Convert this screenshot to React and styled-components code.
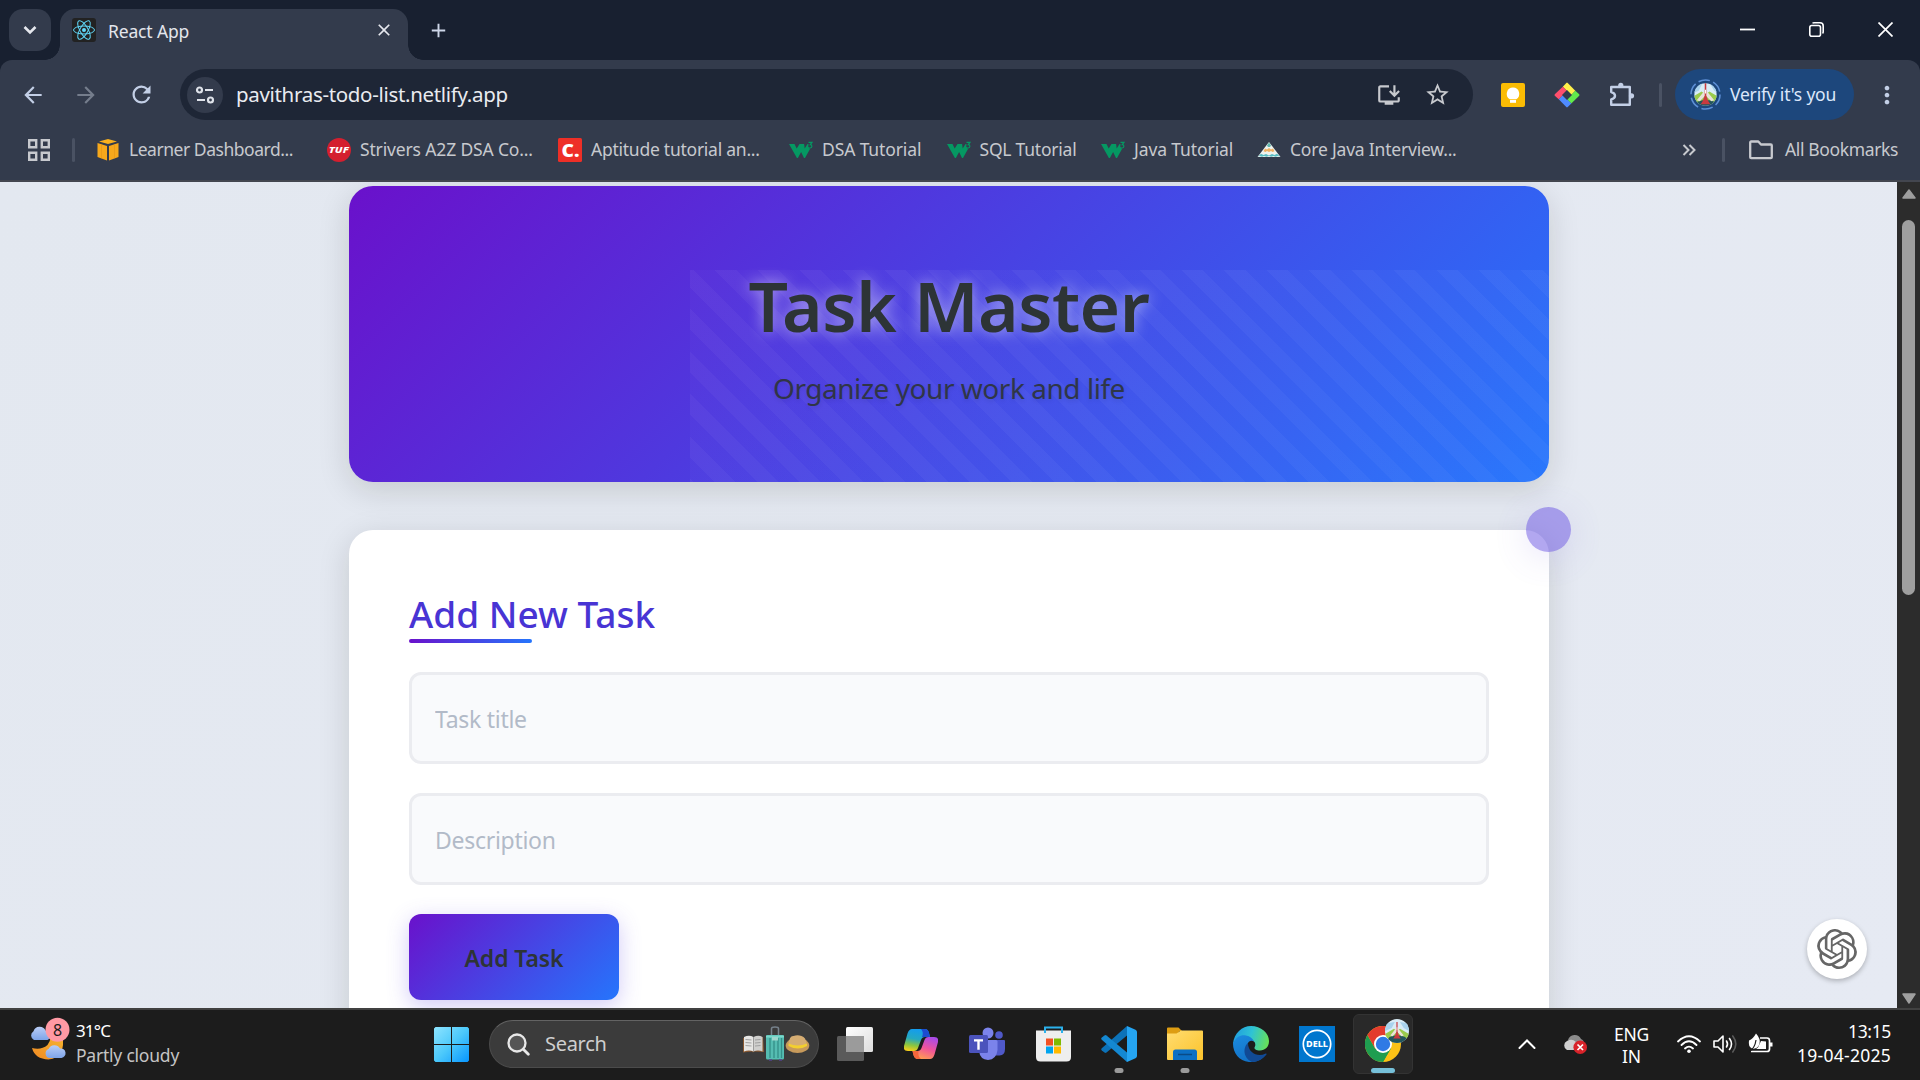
import React from "react";
import styled, { createGlobalStyle, css } from "styled-components";
import { MdArrowBack, MdArrowForward, MdRefresh, MdInstallDesktop, MdStarBorder, MdMoreVert, MdClose, MdAdd } from "react-icons/md";
import { SiOpenai } from "react-icons/si";

const Global = createGlobalStyle`
  * { box-sizing: border-box; }
  body { margin: 0; background: #1c1c1c; overflow: hidden; font-family: "Noto Sans", "Open Sans", sans-serif; }
  svg { display: block; flex: none; }
`;

const Screen = styled.div`
  width: 1920px;
  height: 1080px;
  display: flex;
  flex-direction: column;
  overflow: hidden;
`;

const Text = styled.span`
  display: block;
  white-space: nowrap;
  flex: none;
  padding-bottom: ${(p) => p.$pb ?? 2}px;
  font-size: ${(p) => p.$size || 17.5}px;
  line-height: ${(p) => p.$line || 22}px;
  letter-spacing: ${(p) => p.$track || 0}px;
  color: ${(p) => p.$color || "#dfe2e8"};
`;

/* ---------- browser chrome ---------- */
const TabStrip = styled.div`
  height: 60px;
  flex: none;
  display: flex;
  background: #182030;
  padding: 9px 0 0 9px;
`;
const TabSearch = styled.div`
  width: 42px;
  height: 42px;
  border-radius: 14px;
  background: #333b4c;
  display: flex;
  align-items: center;
  justify-content: center;
  margin-right: 9px;
`;
const Tab = styled.div`
  position: relative;
  width: 348px;
  height: 51px;
  border-radius: 15px 15px 0 0;
  background: #333b4c;
  display: flex;
  align-items: center;
  padding: 0 14px 8px 12px;
  &::before, &::after {
    content: "";
    position: absolute;
    bottom: 0;
    width: 15px;
    height: 15px;
  }
  &::before { left: -15px; background: radial-gradient(circle at 0 0, transparent 14.5px, #333b4c 15px); }
  &::after { right: -15px; background: radial-gradient(circle at 100% 0, transparent 14.5px, #333b4c 15px); }
`;
const Favicon = styled.div`
  width: 24px;
  height: 24px;
  border-radius: 3px;
  background: #222;
  margin: 0 12px 2px 0;
`;
const Spacer = styled.div`flex: 1;`;
const TabClose = styled(MdClose)`margin-bottom: 2px;`;
const NewTab = styled.div`
  width: 60px;
  height: 42px;
  display: flex;
  align-items: center;
  justify-content: center;
`;
const WindowButton = styled.div`
  width: 69px;
  height: 41px;
  display: flex;
  align-items: center;
  justify-content: center;
`;
const ToolbarWrap = styled.div`
  height: 122px;
  flex: none;
  background: #182030;
`;
const ToolbarBody = styled.div`
  height: 122px;
  background: #333b4c;
  border-radius: 12px 12px 0 0;
  border-bottom: 2px solid #43464f;
`;
const NavRow = styled.div`
  height: 69px;
  display: flex;
  align-items: center;
  padding-left: 20px;
`;
const IconSlot = styled.div`
  width: ${(p) => p.$w}px;
  height: ${(p) => p.$h || p.$w}px;
  margin-left: ${(p) => p.$ml || 0}px;
  display: flex;
  align-items: center;
  justify-content: center;
  flex: none;
  color: ${(p) => p.$color || "#c3cfe6"};
`;
const Omnibox = styled.div`
  width: 1293px;
  height: 51px;
  border-radius: 26px;
  background: #1e2636;
  margin-left: 25px;
  display: flex;
  align-items: center;
  padding: 0 22px 0 7px;
`;
const SiteChip = styled.div`
  width: 36px;
  height: 36px;
  border-radius: 50%;
  background: #333b4c;
  margin-right: 13px;
  display: flex;
  align-items: center;
  justify-content: center;
`;
const Divider = styled.div`
  width: 3px;
  height: 24px;
  border-radius: 2px;
  background: #4a5263;
  margin-left: ${(p) => p.$ml}px;
`;
const ProfilePill = styled.div`
  width: 179px;
  height: 51px;
  border-radius: 26px;
  background: #1d477c;
  margin-left: 13px;
  display: flex;
  align-items: center;
  padding-left: 15px;
  gap: 9px;
`;
const BookmarkRow = styled.div`
  height: 42px;
  display: flex;
  align-items: center;
  padding-left: 28px;
`;
const Bookmark = styled.div`
  display: flex;
  align-items: center;
  gap: 9px;
  width: ${(p) => p.$w}px;
  flex: none;
`;

/* ---------- page ---------- */
const Viewport = styled.div`
  height: 826px;
  flex: none;
  display: flex;
  overflow: hidden;
`;
const Page = styled.div`
  position: relative;
  width: 1897px;
  height: 826px;
  overflow: hidden;
  background: linear-gradient(135deg, #e3e8f0, #e6eaf3);
  padding: 4px 0 0 349px;
`;
const Hero = styled.header`
  position: relative;
  width: 1200px;
  height: 296px;
  border-radius: 24px;
  overflow: hidden;
  background: linear-gradient(135deg, #6a11cb 0%, #2575fc 100%);
  display: flex;
  flex-direction: column;
  align-items: center;
  padding-top: 71px;
  &::before {
    content: "";
    position: absolute;
    left: 341px;
    top: 84px;
    right: 0;
    bottom: 0;
    background: repeating-linear-gradient(45deg, rgba(255, 255, 255, 0.05) 0 2.5px, rgba(255, 255, 255, 0.02) 2.5px 17.5px, rgba(255, 255, 255, 0.05) 17.5px 30px);
  }
`;
const HeroShadow = styled.div`
  width: 1200px;
  border-radius: 24px;
  box-shadow: 0 8px 32px rgba(20, 20, 0, 0.14);
`;
const Title = styled.h1`
  position: relative;
  margin: 0;
  font-size: 69.5px;
  line-height: 96px;
  font-weight: 600;
  letter-spacing: -0.5px;
  white-space: nowrap;
  color: #2d3436;
  text-shadow: 0 0 15px rgba(255, 255, 255, 0.55);
`;
const Subtitle = styled.p`
  position: relative;
  margin: 14px 0 0;
  font-size: 28px;
  line-height: 42px;
  letter-spacing: -0.46px;
  white-space: nowrap;
  color: #2d3436;
  opacity: 0.9;
  text-shadow: 0 2px 4px rgba(0, 0, 0, 0.1);
`;
const Card = styled.section`
  position: relative;
  width: 1200px;
  height: 640px;
  margin-top: 48px;
  border-radius: 24px;
  background: #fff;
  box-shadow: 0 8px 32px rgba(20, 20, 0, 0.14);
  padding: 59px 60px;
  display: flex;
  flex-direction: column;
  align-items: flex-start;
`;
const Orb = styled.div`
  position: absolute;
  right: -22px;
  top: -23px;
  width: 45px;
  height: 45px;
  border-radius: 50%;
  opacity: 0.5;
  background: #6751e3;
  box-shadow: 0 6px 30px rgba(103, 81, 227, 0.25);
`;
const Heading = styled.h2`
  margin: 0;
  font-size: 37px;
  line-height: 49px;
  font-weight: 500;
  color: #4834d4;
  letter-spacing: 0;
  white-space: nowrap;
`;
const Underline = styled.div`
  width: 123px;
  height: 4px;
  margin-top: 1px;
  border-radius: 2px;
  background: linear-gradient(90deg, #6a11cb, #2575fc);
`;
const Field = styled.input`
  width: 1080px;
  height: 92px;
  margin: 29px 0 0;
  border: 3px solid #ebecf0;
  border-radius: 12px;
  background: #f9fafc;
  padding: 1px 24px 0 23px;
  font: 400 23px "Noto Sans", sans-serif;
  letter-spacing: -0.28px;
  &::placeholder { color: #b2bac8; opacity: 1; }
`;
const AddButton = styled.button`
  width: 210px;
  height: 86px;
  margin: 29px 0 0;
  border: 0;
  border-radius: 12px;
  background: linear-gradient(135deg, #6a11cb 0%, #2575fc 100%);
  box-shadow: 0 6px 22px rgba(103, 81, 227, 0.3);
  font: 600 23px "Noto Sans", sans-serif;
  letter-spacing: -0.1px;
  color: #2d3436;
  padding: 1px 0 0;
`;
const ChatBubble = styled.div`
  position: absolute;
  left: 1807px;
  top: 737px;
  width: 60px;
  height: 60px;
  border-radius: 50%;
  background: #fff;
  box-shadow: 0 2px 5px rgba(0, 0, 0, 0.25);
  display: flex;
  align-items: center;
  justify-content: center;
  color: #666;
`;
const Scrollbar = styled.div`
  width: 23px;
  background: #2c2c2c;
  display: flex;
  flex-direction: column;
  align-items: center;
  padding-top: 7px;
`;
const Thumb = styled.div`
  width: 13px;
  height: 375px;
  border-radius: 7px;
  background: #9f9f9f;
  margin: 21px 0 398px;
`;

/* ---------- taskbar ---------- */
const Taskbar = styled.div`
  height: 72px;
  flex: none;
  border-top: 2px solid #414141;
  background: #1c1c1c;
  display: flex;
  align-items: center;
  padding-bottom: 2px;
`;
const Weather = styled.div`
  width: 434px;
  display: flex;
  padding-left: 29px;
  gap: 5px;
  align-items: center;
`;
const WeatherGlyph = styled.div`padding-bottom: 11px;`;
const Stack = styled.div`
  display: flex;
  flex-direction: column;
  align-items: ${(p) => p.$align || "flex-start"};
  margin: ${(p) => p.$mt || 0}px 0 0 ${(p) => p.$ml || 0}px;
`;
const SearchBox = styled.div`
  width: 330px;
  height: 48px;
  margin: 0 3px 0 20px;
  border-radius: 24px;
  border: 1px solid #4b4b4b;
  border-top-color: #636363;
  background: #3b3b3b;
  display: flex;
  align-items: center;
  padding: 0 8px 0 17px;
`;
const AppCell = styled.div`
  position: relative;
  width: 60px;
  height: 60px;
  margin: 0 3px;
  border-radius: 6px;
  display: flex;
  align-items: center;
  justify-content: center;
  ${(p) => p.$active && css`background: #292929; border: 1px solid #333;`}
  &::after {
    content: "";
    position: absolute;
    bottom: ${(p) => (p.$active ? 0 : 1)}px;
    left: 50%;
    transform: translateX(-50%);
    height: 5px;
    border-radius: 3px;
    width: ${(p) => (p.$active ? 24 : p.$running ? 9 : 0)}px;
    background: ${(p) => (p.$active ? "#76c0d9" : "#9a9a9a")};
  }
`;
const Badge = styled.div`
  position: absolute;
  left: 31px;
  top: 4px;
`;
const Tray = styled.div`
  flex: 1;
  display: flex;
  align-items: center;
  justify-content: flex-end;
  padding-right: 29px;
`;

/* ---------- drawings ---------- */
const ReactLogo = () => (
  <svg width="24" height="24" viewBox="-12 -12 24 24" fill="none" stroke="#61dafb" strokeWidth="1">
    <ellipse rx="10.5" ry="4" />
    <ellipse rx="10.5" ry="4" transform="rotate(60)" />
    <ellipse rx="10.5" ry="4" transform="rotate(120)" />
    <circle r="2" fill="#61dafb" stroke="none" />
  </svg>
);
const TuneIcon = () => (
  <svg width="20" height="20" viewBox="0 0 20 20" fill="none" stroke="#dfe3ea" strokeWidth="2.2">
    <circle cx="4.500" cy="5" r="2.500" /><path d="M10 5h8M2 15h8" /><circle cx="15.500" cy="15" r="2.500" />
  </svg>
);
const GridIcon = () => (
  <svg width="22" height="22" viewBox="0 0 22 22" fill="none" stroke="#c7c9ce" strokeWidth="2.4">
    <path d="M1.2 1.2h7v7h-7zM13.8 1.2h7v7h-7zM1.2 13.8h7v7h-7zM13.8 13.8h7v7h-7z" />
  </svg>
);
const CubeIcon = () => (
  <svg width="24" height="24" viewBox="0 0 24 24">
    <path d="M3 3.500L12 1l9 2.500L12 6z" fill="#f9b01e" />
    <path d="M1.500 5l9.500 3v14.500L1.500 19z" fill="#f7a81b" />
    <path d="M22.500 5L13 8v14.500l9.500-3.500z" fill="#f7a81b" />
    <path d="M5.500 6.300v14M18.500 6.300v14" stroke="#e3941a" strokeWidth=".6" />
  </svg>
);
const TufIcon = () => (
  <svg width="24" height="24" viewBox="0 0 24 24">
    <circle cx="12" cy="12" r="12" fill="#d41f2f" />
    <text x="1.800" y="15.300" fontFamily="Noto Sans" fontWeight="800" fontStyle="italic" fontSize="9" textLength="20" lengthAdjust="spacingAndGlyphs" fill="#fff">TUF</text>
  </svg>
);
const CIcon = () => (
  <svg width="24" height="24" viewBox="0 0 24 24" overflow="visible">
    <rect width="24" height="24" rx="1.500" fill="#ee2f27" />
    <text x="3.500" y="18.800" fontFamily="Noto Sans" fontWeight="900" fontSize="18" textLength="18" lengthAdjust="spacingAndGlyphs" fill="#fff">C.</text>
  </svg>
);
const W3Icon = () => (
  <svg width="24" height="24" viewBox="0 0 24 24">
    <path d="M0 6h5.500l2.200 4.500L10.500 6h4.600l.6 4.500L18.500 6h1l-.2 3 1.700 2-5 9h-1l-2.900-6-3.200 6h-1z" fill="#059862" />
    <path d="M19.500 4.400h3.400l-1.600 2.200c2 0 2.200 3.200 0 3.400-1 .1-1.600-.3-1.900-.8" fill="none" stroke="#059862" strokeWidth="1.200" />
  </svg>
);
const PeakIcon = () => (
  <svg width="24" height="24" viewBox="0 0 24 24">
    <path d="M12 4l5 6.500 6.500 8.500H.5L7 10.500z" fill="#eef3ee" />
    <path d="M10 7.500l2-3 2 3-1 1.500h-2z" fill="#5fb5ad" />
    <path d="M8 10.500l2 1 2-1.500 2 1.500 2-1 1.500 2.800-2 .6-1.500-1-2 1.200-2-1.200-1.500 1-2-.6z" fill="#f0b060" />
    <path d="M1 18.800l3-3 2.500 1.200 2.500-1 3 1.500 3-1.500 2.500 1 2.500-1.200 3 3-2-.7-2.500.7-2-.7-2.300.7-2.200-.7-2.500.7-2.500-.7-2 .7-2.500-.7z" fill="#58bcc2" />
  </svg>
);
const FolderOutline = () => (
  <svg width="24" height="20" viewBox="0 0 24 20" fill="none" stroke="#c7c9ce" strokeWidth="2.300">
    <path d="M1.200 3V17.200q0 1 1 1H21.800q1 0 1-1V5.500q0-1-1-1H12L9.300 1.500H2.200q-1 0-1 1z" strokeLinejoin="round" />
  </svg>
);
const PuzzleIcon = () => (
  <svg width="26" height="26" viewBox="0 0 26 26">
    <path d="M2.200 5h18.600v17.800H2.200v-5.300q3.800-1 3.800-3.700t-3.800-3.700z" fill="none" stroke="#c3cfe6" strokeWidth="2.400" strokeLinejoin="round" />
    <circle cx="11.800" cy="3.400" r="2.600" fill="#c3cfe6" />
    <circle cx="22.500" cy="13.800" r="2.600" fill="#c3cfe6" />
  </svg>
);
const KeepIcon = () => (
  <svg width="24" height="24" viewBox="0 0 24 24">
    <rect width="24" height="24" rx="2" fill="#fbbc04" />
    <path d="M12 4.500a6.300 6.300 0 0 0-3.200 11.700h6.400A6.300 6.300 0 0 0 12 4.500z" fill="#fff" />
    <rect x="9" y="17" width="6" height="2.800" fill="#fff" />
  </svg>
);
const DiamondIcon = () => (
  <svg width="26" height="26" viewBox="0 0 26 26">
    <path d="M8.800 4.700L12.300.9q.7-.6 1.400 0L21.300 8.800l-4 4.200z" fill="#fff04a" />
    <path d="M21.300 8.800l3.900 3.400q.6.800 0 1.600L17.300 21.500 13 17.300z" fill="#62ea4c" />
    <path d="M4.700 17.200L8.700 13l8.600 8.500-3.600 3.600q-.7.600-1.400 0z" fill="#4f8bff" />
    <path d="M8.800 4.700l4.200 4-8.300 8.500-3.900-3.400q-.6-.8 0-1.600z" fill="#ff4f6d" />
    <path d="M13 8L18 13 13 18 8 13z" fill="#333b4c" />
  </svg>
);
const Scene = ({ size, ring }) => (
  <svg width={size} height={size} viewBox="-16 -16 32 32">
    <defs><clipPath id={"disc" + size}><circle r={ring ? 11.500 : 16} /></clipPath></defs>
    {ring && <circle r="15" fill="none" stroke="#5d8fd6" strokeWidth="1.600" strokeDasharray="12 3.700" />}
    <g clipPath={`url(#disc${size})`}>
      <rect x="-16" y="-16" width="32" height="32" fill="#d9ecf7" />
      <path d="M-16-10L-3-12l-4 8-9 4zM16-10L4-12l5 8 7 4z" fill="#a9d3ee" />
      <path d="M-16 4L-4-3 0 0l4-3L16 4v6H-16z" fill="#9acb4c" />
      <path d="M-16 16l6-8 7-2h7l7 2 5 8z" fill="#23555c" />
      <path d="M-9 6L-1-4h2l8 10-3 1-6-6-6 6z" fill="#e8e2da" />
      <path d="M-.8-12H.8V1L3 7l2 3H-5l2-3 2.200-6z" fill="#c93a3f" />
      <path d="M-.5-5h1v4h-1z" fill="#fff" />
    </g>
  </svg>
);
const WeatherIcon = () => (
  <svg width="42" height="44" viewBox="0 0 42 44">
    <defs>
      <linearGradient id="moon" x1="0" y1="1" x2="1" y2="0"><stop stopColor="#f08a24" /><stop offset="1" stopColor="#f7b32e" /></linearGradient>
      <linearGradient id="cloud" x1="0" y1="0" x2="0" y2="1"><stop stopColor="#b9cdf6" /><stop offset="1" stopColor="#7ea4e8" /></linearGradient>
    </defs>
    <path d="M3 31q9 2.500 15.500-3 3-4 3-8h12q1.500 8-1 14-4 8-13 8.500Q6 42 3 31z" fill="url(#moon)" />
    <path d="M5 23a5 5 0 0 1-.5-8.800A6.500 6.500 0 0 1 16.500 13.500a5 5 0 0 1 2 9.500z" fill="url(#cloud)" />
    <path d="M20 41a4.800 4.800 0 0 1-.5-9A6.500 6.500 0 0 1 31 31.500a4.800 4.800 0 0 1 1.500 9.500z" fill="url(#cloud)" />
    <circle cx="28.500" cy="12.800" r="12" fill="#ff99a4" />
    <text x="28.500" y="18.500" textAnchor="middle" fontFamily="Noto Sans" fontSize="16" fill="#1c1c1c">8</text>
  </svg>
);
const StartIcon = () => (
  <svg width="35" height="35" viewBox="0 0 35 35">
    <defs><linearGradient id="win" gradientUnits="userSpaceOnUse" x1="0" y1="0" x2="35" y2="35"><stop stopColor="#8ee4ff" /><stop offset=".5" stopColor="#4cc9fb" /><stop offset="1" stopColor="#0795ff" /></linearGradient></defs>
    <path d="M1.500 0H17v17H0V1.500zM18 0h15.500L35 1.500V17H18zM0 18h17v17H1.500L0 33.500zM18 18h17v15.500L33.500 35H18z" fill="url(#win)" />
  </svg>
);
const SearchIcon = () => (
  <svg width="23" height="23" viewBox="0 0 23 23" fill="none" stroke="#e8e8e8" strokeWidth="2.300" strokeLinecap="round">
    <circle cx="10" cy="10" r="8.500" fill="#555" /><path d="M16.300 16.300l5 5" strokeWidth="2.800" />
  </svg>
);
const TravelIcons = () => (
  <svg width="68" height="36" viewBox="0 0 68 36">
    <path d="M1 12l10-1 1 1 9-1 1 15-10-.5-1 1-1-1L1 26.500z" fill="#8a5a33" />
    <path d="M2 11q5-2.500 9.500 0v14.500q-4.500-2-9.500 0z" fill="#e6e6e4" /><path d="M11.500 11q5-2.500 9 0v14.500q-4.500-2-9 0z" fill="#cfcfcd" />
    <path d="M3.500 13.500l6 .5M3.500 16.500l6 .5M3.500 19.500l6 .5M13 14l5.500-.5M13 17l5.500-.5M13 20l5.500-.5M11.500 11v14.500" stroke="#999" strokeWidth=".9" />
    <path d="M29.500 9V2.500q0-1.500 3.500-1.500t3.500 1.500V9" fill="none" stroke="#77828c" strokeWidth="1.500" />
    <rect x="24" y="9" width="18" height="24.500" rx="1.500" fill="#55bdb2" />
    <path d="M28 12v20M32 12v20M36 12v20M39.500 12v20" stroke="#348f88" strokeWidth="1.300" />
    <path d="M24 9.500h18v2H24z" fill="#7bd8cc" /><path d="M30 11h6v3.500h-6z" fill="#9ed7cd" />
    <path d="M27 34h3M37 34h3" stroke="#54438f" strokeWidth="1.500" />
    <ellipse cx="55.500" cy="19.500" rx="11.800" ry="7.500" fill="#c79a5b" />
    <path d="M46.500 18q1-8.500 5-8 4-1.500 8 0 4.500 1 5 8-8 5-18 0z" fill="#d5ad73" />
    <path d="M46.500 17.500q9 4 18.500 0v2.500q-9 5-18.500 0z" fill="#f3cf2f" />
  </svg>
);
const TaskViewIcon = () => (
  <svg width="36" height="34" viewBox="0 0 36 34">
    <defs><linearGradient id="tv" x1="0" y1="0" x2="1" y2="1"><stop stopColor="#fff" /><stop offset="1" stopColor="#ddd" /></linearGradient></defs>
    <rect y="9" width="27" height="25" rx="1.500" fill="#5a5a5a" />
    <rect x="9" width="27" height="25" rx="1.500" fill="url(#tv)" />
    <path d="M9 9h18v16H9z" fill="#9b9b9b" />
  </svg>
);
const CopilotIcon = () => (
  <svg width="34" height="32" viewBox="0 0 34 32">
    <defs>
      <linearGradient id="cpa" x1=".5" y1="0" x2=".3" y2="1"><stop stopColor="#139cf0" /><stop offset=".45" stopColor="#25a9c0" /><stop offset=".75" stopColor="#8cc63f" /><stop offset="1" stopColor="#f5cf1b" /></linearGradient>
      <linearGradient id="cpb" x1=".7" y1="0" x2=".3" y2="1"><stop stopColor="#a94be8" /><stop offset=".5" stopColor="#f0549a" /><stop offset="1" stopColor="#ffa04f" /></linearGradient>
    </defs>
    <path d="M8 1h13q3 0 4 4l1 4h-5q-3 0-4 3l-3 8q-1 3-4 3H4q-5 0-4-5L3.500 5.500Q5 1 8 1z" fill="url(#cpa)" />
    <path d="M17 1h4q3 0 4 4l1 4h-8q2-5-1-8z" fill="#1c4bd0" />
    <path d="M26 31H14q-3.500 0-4.500-4l-1-4h5q3 0 4-3l3-8q1-3 4-3H30q5 0 4 5l-3.500 12.500Q29 31 26 31z" fill="url(#cpb)" />
    <path d="M17 31h-3q-3.500 0-4.500-4l-1-4h6q-1 5 2.500 8z" fill="#f4663c" />
  </svg>
);
const TeamsIcon = () => (
  <svg width="36" height="34" viewBox="0 0 36 34">
    <circle cx="30" cy="8" r="3.800" fill="#5059c9" /><circle cx="19" cy="6" r="5.500" fill="#7b83eb" />
    <path d="M24 13h11q1 0 1 1v8q0 6-5.500 6.500H24z" fill="#5059c9" />
    <path d="M11 13h16q1.500 0 1.500 1.500V23q-1 9.500-9.500 10-8-.5-9-9z" fill="#7b83eb" />
    <rect x="0" y="8" width="19" height="18" rx="1.500" fill="#4b53bc" />
    <path d="M5 12.300h9v2.200h-3.300v8.200H8.300v-8.200H5z" fill="#fff" />
  </svg>
);
const StoreIcon = () => (
  <svg width="35" height="36" viewBox="0 0 35 36">
    <path d="M9 7V1.500h17V7" fill="none" stroke="#2bb1ec" strokeWidth="2" />
    <path d="M0 4.500h35V31q0 4.500-4.500 4.500h-26Q0 35.500 0 31z" fill="#eee" /><path d="M8 4h2v3H8zM25 4h2v3h-2z" fill="#2bb1ec" />
    <path d="M10 12.500h7v7h-7z" fill="#f25022" /><path d="M18 12.500h7v7h-7z" fill="#7fba00" /><path d="M10 20.500h7v7h-7z" fill="#00a4ef" /><path d="M18 20.500h7v7h-7z" fill="#ffb900" />
  </svg>
);
const CodeIcon = () => (
  <svg width="36" height="36" viewBox="0 0 36 36">
    <path d="M26 0v9.500L5.500 26.500q-1 .8-2 .1L.8 24.500q-1.200-1.200 0-2.300z" fill="#0c72b8" />
    <path d="M26 36v-9.500L5.500 9.500q-1-.8-2-.1L.8 11.500q-1.200 1.200 0 2.300z" fill="#1488d2" />
    <path d="M26 0l8.500 3.800q1.500.8 1.500 2.200v24q0 1.400-1.500 2.200L26 36q-.5 0 0-1z" fill="#25a5f2" />
  </svg>
);
const ExplorerIcon = () => (
  <svg width="36" height="34" viewBox="0 0 36 34">
    <defs><linearGradient id="fold" x1="0" y1="0" x2="1" y2="1"><stop stopColor="#ffdc70" /><stop offset="1" stopColor="#fcc32b" /></linearGradient></defs>
    <path d="M0 1.500Q0 .5 1 .5h10.500L15 4h-2l-3 3H0z" fill="#dd9d12" />
    <path d="M0 6.500h9.500L14 3.500h21q1 0 1 1V32q0 1-1 1H1q-1 0-1-1z" fill="url(#fold)" />
    <path d="M6 33V25q0-2.500 2.500-2.500h19q2.500 0 2.500 2.500v8z" fill="#0c70c4" /><path d="M11 27.500h14" stroke="#0a4b86" strokeWidth="1.500" />
  </svg>
);
const EdgeIcon = () => (
  <svg width="36" height="36" viewBox="0 0 36 36">
    <defs>
      <linearGradient id="ea" x1="0" y1=".3" x2="1" y2=".5"><stop stopColor="#1f9ce0" /><stop offset=".5" stopColor="#2fc3d4" /><stop offset="1" stopColor="#66e05a" /></linearGradient>
      <linearGradient id="eb" x1="0" y1="0" x2=".5" y2="1"><stop stopColor="#1b8be0" /><stop offset="1" stopColor="#1270c4" /></linearGradient>
    </defs>
    <path d="M0 18C1 7 9 0 18 0c10 0 18 7 18 15 0 6-4 9.500-9 9.500-4 0-6-1.500-5.500-3 1.500-2 1-5-1-6.500C15 10 6 10 0 18z" fill="url(#ea)" />
    <path d="M0 17.500C3 10 9 8.500 13 9.500c4 .8 7 3 8 6-3-2-6 0-6.500 3-.5 6 4 12 11 12 3 0 5-1 7-2.200C29 34 23 36.500 16 36 6 35 0 27 0 17.500z" fill="url(#eb)" />
    <path d="M15 17c-4.500 3.500-6 14 4 19 6 0 11-3 14.500-7.500.3-.8-.5-1.300-1.200-.8C25 31.500 15 27 15 17z" fill="#114a95" />
  </svg>
);
const DellIcon = () => (
  <svg width="36" height="36" viewBox="0 0 36 36">
    <path d="M0 0h36v36H0z" fill="#0076ce" /><circle cx="18" cy="18" r="13.700" fill="none" stroke="#fff" strokeWidth="1.700" />
    <text x="7" y="21.300" fontFamily="Noto Sans" fontWeight="800" fontSize="9.500" textLength="22" lengthAdjust="spacingAndGlyphs" fill="#fff">DELL</text>
  </svg>
);
const ChromeIcon = () => (
  <svg width="36" height="36" viewBox="-18 -18 36 36">
    <circle r="18" fill="#fbc116" />
    <path d="M-15.600-9A18 18 0 0 1 15.600-9H0z" fill="#e33b2e" />
    <path d="M-15.600-9A18 18 0 0 0 0 18L7.800 4.500-7.800 4.500z" fill="#1f9d50" />
    <path d="M-15.600-9L-7.800 4.500 0 0 0-9z" fill="#e33b2e" />
    <path d="M0 18L7.800 4.500 0 0z" fill="#1f9d50" /><path d="M0-9h15.600L7.800 4.500z" fill="#fbc116" />
    <circle r="9" fill="#fff" /><circle r="7.200" fill="#2f7ae5" />
  </svg>
);
const CloudError = () => (
  <svg width="24" height="22" viewBox="0 0 24 22">
    <path d="M5 7a7 7 0 0 1 13-1q3 1 3 5l-8 2z" fill="#8b8b8b" /><path d="M4 17a5 5 0 0 1 0-9q5-3 9 1l4 8z" fill="#d0d0d0" />
    <circle cx="17.200" cy="14.300" r="6.800" fill="#d8232a" /><path d="M14.500 11.500l5.500 5.500M20 11.500l-5.500 5.500" stroke="#fff" strokeWidth="1.700" />
  </svg>
);
const WifiIcon = () => (
  <svg width="24" height="19" viewBox="0 0 24 19" fill="none" stroke="#fff" strokeWidth="1.800" strokeLinecap="round">
    <path d="M1 6.500Q12-4 23 6.500M4.500 10Q12 2.500 19.500 10M8 13.500q4-3.700 8 0" /><circle cx="12" cy="16.300" r="1.800" fill="#fff" stroke="none" />
  </svg>
);
const VolumeIcon = () => (
  <svg width="25" height="20" viewBox="0 0 25 20" fill="none" stroke="#fff" strokeWidth="1.600" strokeLinecap="round" strokeLinejoin="round">
    <path d="M1 7h4l5-5v16l-5-5H1zM13.500 7q2 3 0 6M16.500 4.500q4 5.500 0 11" /><path d="M19.800 2q6 8 0 16" stroke="#5a5a5a" />
  </svg>
);
const BatteryIcon = () => (
  <svg width="25" height="22" viewBox="0 0 25 22">
    <path d="M12 5h7q2.500 0 2.500 2.500v8.500q0 2.500-2.500 2.500H3" fill="none" stroke="#fff" strokeWidth="1.700" /><path d="M22 9.500h2.500v4H22zM10 14.500l3-6.500 5 .5v7.500H8z" fill="#fff" />
    <path d="M8 .5Q13 6 11.500 11 9.500 16.500 4 15.500q-4-2-3-8Q5 6 8 .5z" fill="#fff" /><path d="M1 19Q7 15 8 7" stroke="#1c1c1c" fill="none" strokeWidth="1.200" />
  </svg>
);

const bookmarks = [
  { label: "Learner Dashboard...", icon: <CubeIcon />, w: 231, track: -0.46 },
  { label: "Strivers A2Z DSA Co...", icon: <TufIcon />, w: 231, track: -0.15 },
  { label: "Aptitude tutorial an...", icon: <CIcon />, w: 231, track: -0.25 },
  { label: "DSA Tutorial", icon: <W3Icon />, w: 157.5, track: -0.12 },
  { label: "SQL Tutorial", icon: <W3Icon />, w: 154.5, track: -0.22 },
  { label: "Java Tutorial", icon: <W3Icon />, w: 156, track: -0.1 },
  { label: "Core Java Interview...", icon: <PeakIcon />, w: 425, track: -0.2 },
];

const apps = [
  { name: "taskview", icon: <TaskViewIcon /> },
  { name: "copilot", icon: <CopilotIcon /> },
  { name: "teams", icon: <TeamsIcon /> },
  { name: "store", icon: <StoreIcon /> },
  { name: "code", icon: <CodeIcon />, running: true },
  { name: "explorer", icon: <ExplorerIcon />, running: true },
  { name: "edge", icon: <EdgeIcon /> },
  { name: "dell", icon: <DellIcon /> },
  { name: "chrome", icon: <ChromeIcon />, active: true },
];

export default function App() {
  return (
    <Screen>
      <Global />
      <TabStrip>
        <TabSearch>
          <svg width="14" height="10" viewBox="0 0 14 10" fill="none" stroke="#e6e8ee" strokeWidth="2.600"><path d="M1.500 2L7 7.500 12.500 2" /></svg>
        </TabSearch>
        <Tab>
          <Favicon><ReactLogo /></Favicon>
          <Text $pb={0} $track={-0.16} $color="#e3e6ec">React App</Text>
          <Spacer />
          <TabClose size={20} color="#e6e8ee" />
        </Tab>
        <NewTab><MdAdd size={23} color="#cdd6e8" /></NewTab>
        <Spacer />
        <WindowButton><svg width="15" height="15"><path d="M0 7.500h15" stroke="#fff" strokeWidth="1.800" /></svg></WindowButton>
        <WindowButton><svg width="15" height="15" fill="none" stroke="#fff" strokeWidth="1.600"><rect x=".8" y="3.500" width="10.700" height="10.700" rx="2" /><path d="M3.500 1Q4.500.8 5.500.8H11q3.200 0 3.200 3.200v5.500q0 1-.5 2" /></svg></WindowButton>
        <WindowButton><svg width="15" height="15"><path d="M.5.5l14 14M14.500.5l-14 14" stroke="#fff" strokeWidth="1.700" /></svg></WindowButton>
      </TabStrip>
      <ToolbarWrap>
        <ToolbarBody>
          <NavRow>
            <IconSlot $w={26}><MdArrowBack size={26} /></IconSlot>
            <IconSlot $w={26} $ml={27} $color="#757d8c"><MdArrowForward size={26} /></IconSlot>
            <IconSlot $w={28} $ml={28}><MdRefresh size={27} /></IconSlot>
            <Omnibox>
              <SiteChip><TuneIcon /></SiteChip>
              <Text $size={20.5} $line={26} $track={-0.32} $color="#e9ebf0">pavithras-todo-list.netlify.app</Text>
              <Spacer />
              <IconSlot $w={26} $color="#c7c9ce"><MdInstallDesktop size={26} /></IconSlot>
              <IconSlot $w={27} $ml={22} $color="#c7c9ce"><MdStarBorder size={27} /></IconSlot>
            </Omnibox>
            <IconSlot $w={24} $ml={28}><KeepIcon /></IconSlot>
            <IconSlot $w={26} $ml={29}><DiamondIcon /></IconSlot>
            <IconSlot $w={28} $ml={28}><PuzzleIcon /></IconSlot>
            <Divider $ml={23} />
            <ProfilePill>
              <Scene size={31} ring />
              <Text $track={-0.2} $color="#dbe7fb">Verify it's you</Text>
            </ProfilePill>
            <IconSlot $w={28} $ml={19}><MdMoreVert size={28} /></IconSlot>
          </NavRow>
          <BookmarkRow>
            <GridIcon />
            <Divider $ml={22} />
            <IconSlot $w={21} />
            {bookmarks.map((b) => (
              <Bookmark key={b.label} $w={b.w}>
                {b.icon}
                <Text $track={b.track} $color="#c7c9ce">{b.label}</Text>
              </Bookmark>
            ))}
            <svg width="14" height="12" viewBox="0 0 14 12" fill="none" stroke="#c7c9ce" strokeWidth="2"><path d="M1.500 1l5 5-5 5M7.500 1l5 5-5 5" /></svg>
            <Divider $ml={26} />
            <IconSlot $w={24} $ml={24}><FolderOutline /></IconSlot>
            <IconSlot $w={12} $h={10} />
            <Text $track={-0.36} $color="#c7c9ce">All Bookmarks</Text>
          </BookmarkRow>
        </ToolbarBody>
      </ToolbarWrap>
      <Viewport>
        <Page>
          <HeroShadow>
            <Hero>
              <Title>Task Master</Title>
              <Subtitle>Organize your work and life</Subtitle>
            </Hero>
          </HeroShadow>
          <Card>
            <Heading>Add New Task</Heading>
            <Underline />
            <Field placeholder="Task title" />
            <Field placeholder="Description" />
            <AddButton>Add Task</AddButton>
            <Orb />
          </Card>
          <ChatBubble><SiOpenai size={40} /></ChatBubble>
        </Page>
        <Scrollbar>
          <svg width="14" height="10"><path d="M7 1L13 9H1z" fill="#9f9f9f" stroke="#9f9f9f" strokeLinejoin="round" strokeWidth="1.500" /></svg>
          <Thumb />
          <svg width="14" height="11"><path d="M7 10L13 1H1z" fill="#9f9f9f" stroke="#9f9f9f" strokeLinejoin="round" strokeWidth="1.500" /></svg>
        </Scrollbar>
      </Viewport>
      <Taskbar>
        <Weather>
          <WeatherGlyph><WeatherIcon /></WeatherGlyph>
          <Stack>
            <Text $size={17} $track={-0.85} $color="#fff">31°C</Text>
            <Text $track={-0.22} $color="#c4c4c4">Partly cloudy</Text>
          </Stack>
        </Weather>
        <StartIcon />
        <SearchBox>
          <SearchIcon />
          <IconSlot $w={15} />
          <Text $size={20} $line={26} $pb={0} $track={-0.3} $color="#cfcfcf">Search</Text>
          <Spacer />
          <TravelIcons />
        </SearchBox>
        {apps.map((a) => (
          <AppCell key={a.name} $running={a.running} $active={a.active}>
            {a.icon}
            {a.active && <Badge><Scene size={24} /></Badge>}
          </AppCell>
        ))}
        <Tray>
          <svg width="18" height="12" viewBox="0 0 18 12" fill="none" stroke="#fff" strokeWidth="2" strokeLinecap="round"><path d="M1.500 10L9 2.500l7.500 7.500" /></svg>
          <IconSlot $w={24} $ml={27}><CloudError /></IconSlot>
          <Stack $align="center" $ml={27} $mt={3}>
            <Text $line={20} $track={-0.26} $color="#fff">ENG</Text>
            <Text $line={20} $track={-0.1} $color="#fff">IN</Text>
          </Stack>
          <IconSlot $w={24} $ml={28}><WifiIcon /></IconSlot>
          <IconSlot $w={25} $ml={12}><VolumeIcon /></IconSlot>
          <IconSlot $w={25} $ml={10}><BatteryIcon /></IconSlot>
          <Stack $align="flex-end" $ml={24}>
            <Text $track={-0.35} $color="#fff">13:15</Text>
            <Text $track={0.26} $color="#fff">19-04-2025</Text>
          </Stack>
        </Tray>
      </Taskbar>
    </Screen>
  );
}
